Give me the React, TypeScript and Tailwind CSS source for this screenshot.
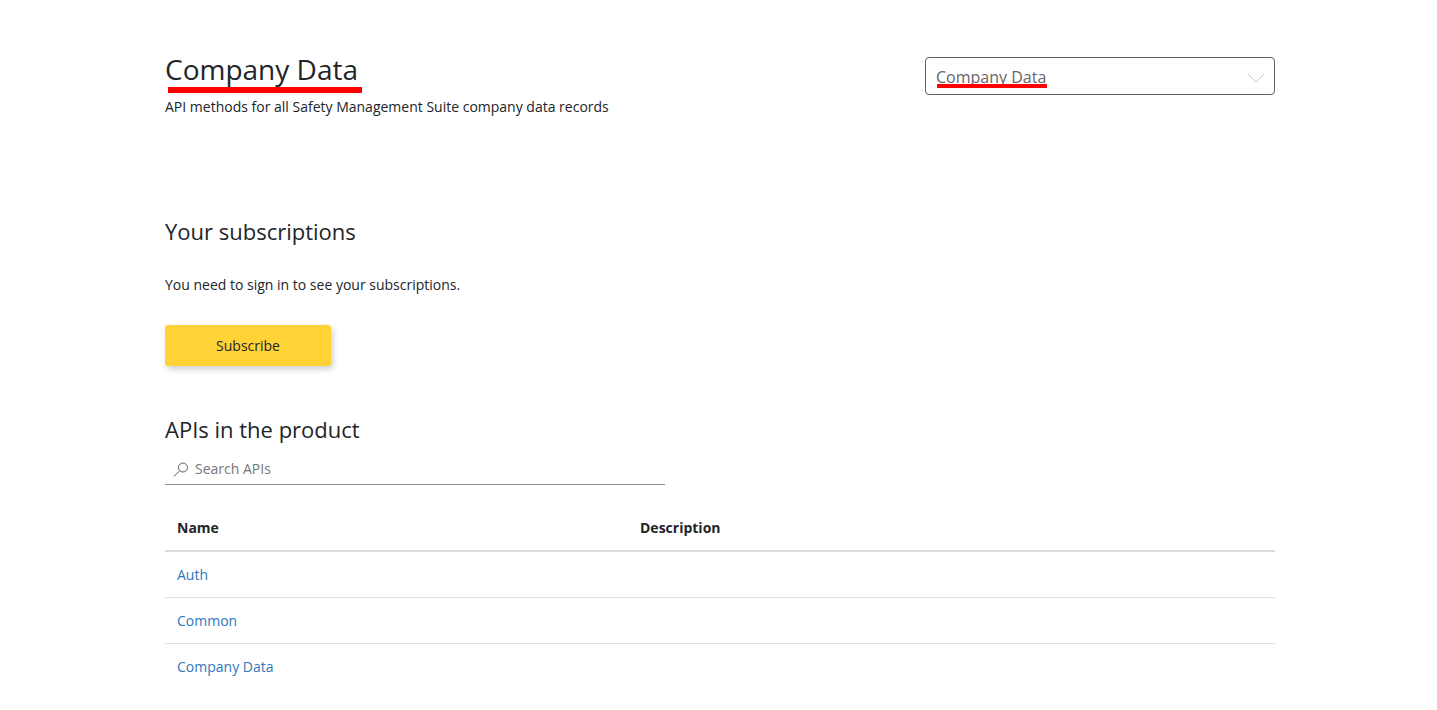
const rows = ['Auth', 'Common', 'Company Data']

function ChevronDown() {
  return (
    <svg width="18" height="10" viewBox="0 0 18 10" fill="none" className="absolute right-[9px] top-[15px]">
      <path d="M1 1l8 8 8-8" stroke="#c4c4c4" strokeWidth="1" />
    </svg>
  )
}

function SearchGlass() {
  return (
    <svg width="16" height="16" viewBox="0 0 16 16" fill="none" className="shrink-0">
      <circle cx="10" cy="6.5" r="4.5" stroke="#5c5c5c" strokeWidth="1" />
      <path d="M6.6 9.9L0.8 15.4" stroke="#5c5c5c" strokeWidth="1" />
    </svg>
  )
}

export default function App() {
  return (
    <div className="min-h-[710px] h-[710px] overflow-hidden bg-white font-['Open_Sans',sans-serif] text-[#212529]">
      <div className="mx-auto w-[1110px] pt-[49px] ml-[165px]">
        <div className="flex items-start justify-between">
          <div>
            <h1 className="relative inline-block text-[28px] leading-[40px] text-[#212529]">
              Company Data
              <span className="absolute left-[3px] top-[38px] h-[6px] w-[194px] bg-[#ff0000]" />
            </h1>
            <p className="mt-[6px] text-sm leading-[24px]">API methods for all Safety Management Suite company data records</p>
          </div>
          <div className="relative mt-[8px] h-[38px] w-[350px] rounded-[4px] border border-[#5f5f5f] pl-[10px] text-base leading-[39px] text-[#666]">
            <span className="relative inline-block">
              Company Data
              <span className="absolute left-[1px] top-[26px] h-[4px] w-[110px] bg-[#ff0000]" />
            </span>
            <ChevronDown />
          </div>
        </div>

        <h2 className="mt-[94px] text-[22px] leading-[36px]">Your subscriptions</h2>
        <p className="mt-[24px] text-sm leading-[24px]">You need to sign in to see your subscriptions.</p>
        <button
          type="button"
          className="mt-[28px] block h-[41px] w-[166px] rounded-[3px] bg-[#ffd335] text-sm text-[#212529] shadow-[2px_3px_6px_rgba(0,0,0,0.2)]"
        >
          Subscribe
        </button>

        <h2 className="mt-[45px] text-[22px] leading-[36px]">APIs in the product</h2>
        <div className="mt-[6px] flex h-[32px] w-[500px] items-center gap-[6px] border-b border-[#8c8c8c] pl-[8px] text-sm text-[#777]">
          <SearchGlass />
          Search APIs
        </div>

        <div className="mt-[20px] flex h-[47px] items-center border-b-2 border-[#dcdcdc] text-sm font-bold">
          <div className="w-[475px] pl-[12px]">Name</div>
          <div>Description</div>
        </div>
        {rows.map((row) => (
          <div key={row} className="flex h-[46px] items-center border-b border-[#e2e2e2] pl-[12px] text-sm text-[#2e78bd] last:border-b-0">
            {row}
          </div>
        ))}
      </div>
    </div>
  )
}
